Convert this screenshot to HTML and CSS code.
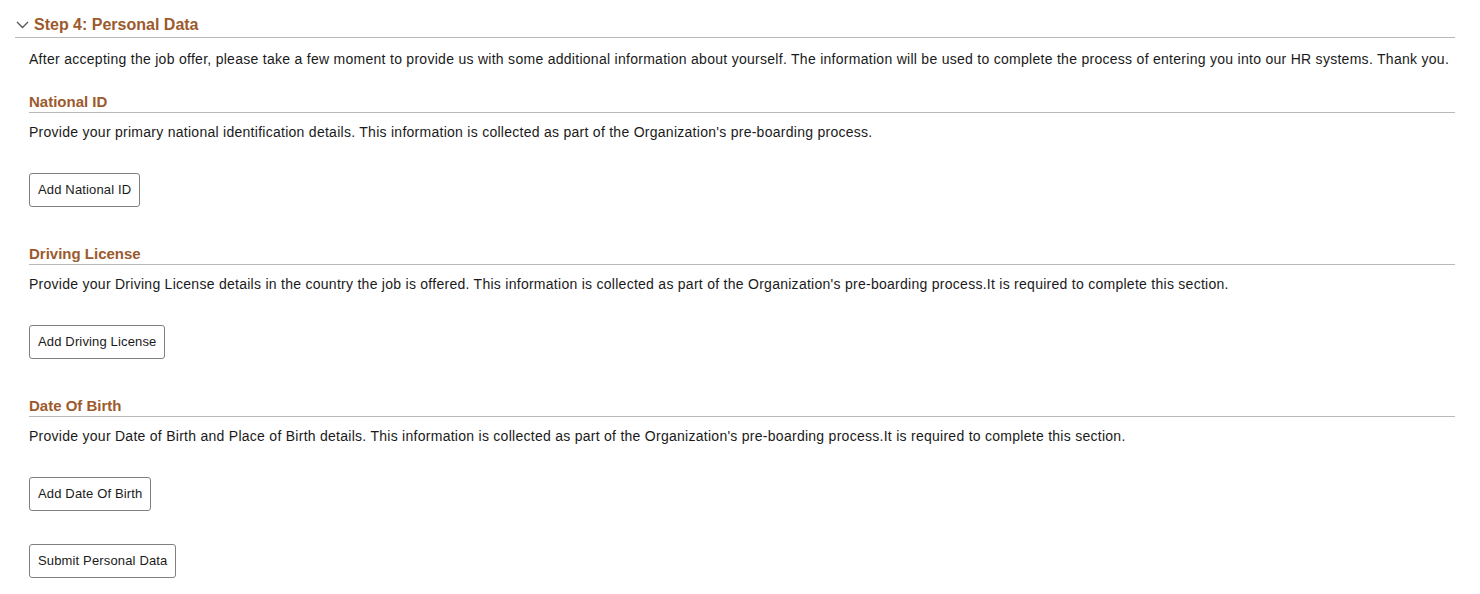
FILE: index.html
```html
<!DOCTYPE html>
<html>
<head>
<meta charset="utf-8">
<link rel="stylesheet" href="styles.css">
</head>
<body>
<div class="page">
  <div class="step-header">
    <svg class="chev" width="13" height="8" viewBox="0 0 13 8"><path d="M1 1 L6.5 6.5 L12 1" fill="none" stroke="#555" stroke-width="1.3"/></svg>
    <span class="step-title">Step 4: Personal Data</span>
  </div>
  <div class="content">
    <p class="intro">After accepting the job offer, please take a few moment to provide us with some additional information about yourself. The information will be used to complete the process of entering you into our HR systems. Thank you.</p>

    <section class="sec">
      <h2 class="sec-title">National ID</h2>
      <p class="sec-desc">Provide your primary national identification details. This information is collected as part of the Organization's pre-boarding process.</p>
      <button class="btn">Add National ID</button>
    </section>

    <section class="sec">
      <h2 class="sec-title">Driving License</h2>
      <p class="sec-desc">Provide your Driving License details in the country the job is offered. This information is collected as part of the Organization's pre-boarding process.It is required to complete this section.</p>
      <button class="btn">Add Driving License</button>
    </section>

    <section class="sec">
      <h2 class="sec-title">Date Of Birth</h2>
      <p class="sec-desc">Provide your Date of Birth and Place of Birth details. This information is collected as part of the Organization's pre-boarding process.It is required to complete this section.</p>
      <button class="btn">Add Date Of Birth</button>
    </section>

    <div class="submit-row">
      <button class="btn">Submit Personal Data</button>
    </div>
  </div>
</div>
</body>
</html>
```
FILE: styles.css
```css
html, body {
  margin: 0;
  padding: 0;
  background: #fff;
}
body {
  font-family: "Liberation Sans", Arial, sans-serif;
  color: #1a1a1a;
}
.page {
  padding: 0 25px 0 15px;
}
.step-header {
  display: flex;
  align-items: center;
  gap: 5px;
  padding-top: 15px;
  padding-bottom: 3px;
  border-bottom: 1px solid #b9b9b9;
}
.chev {
  display: block;
  margin-left: 1px;
  margin-top: 1px;
}
.step-title {
  font-size: 16px;
  font-weight: bold;
  line-height: 19px;
  color: #9c5a2d;
}
.content {
  padding-left: 14px;
}
.intro {
  margin: 13px 0 0;
  font-size: 14px;
  line-height: 16px;
  letter-spacing: 0.28px;
}
.sec {
  margin-top: 26px;
}
.sec + .sec {
  margin-top: 38px;
}
.sec-title {
  margin: 0;
  font-size: 15px;
  font-weight: bold;
  line-height: 16px;
  padding-top: 1px;
  color: #9c5a2d;
  padding-bottom: 2px;
  border-bottom: 1px solid #b9b9b9;
}
.sec-desc {
  margin: 11px 0 0;
  font-size: 14px;
  line-height: 16px;
  letter-spacing: 0.27px;
}
.btn {
  display: block;
  margin-top: 33px;
  height: 34px;
  padding: 0 8px 2px;
  font-family: "Liberation Sans", Arial, sans-serif;
  font-size: 13px;
  letter-spacing: 0.15px;
  color: #1a1a1a;
  background: #fff;
  border: 1px solid #808080;
  border-radius: 3px;
  cursor: pointer;
}
.submit-row {
  margin-top: 33px;
}
.submit-row .btn {
  margin-top: 0;
}
```
